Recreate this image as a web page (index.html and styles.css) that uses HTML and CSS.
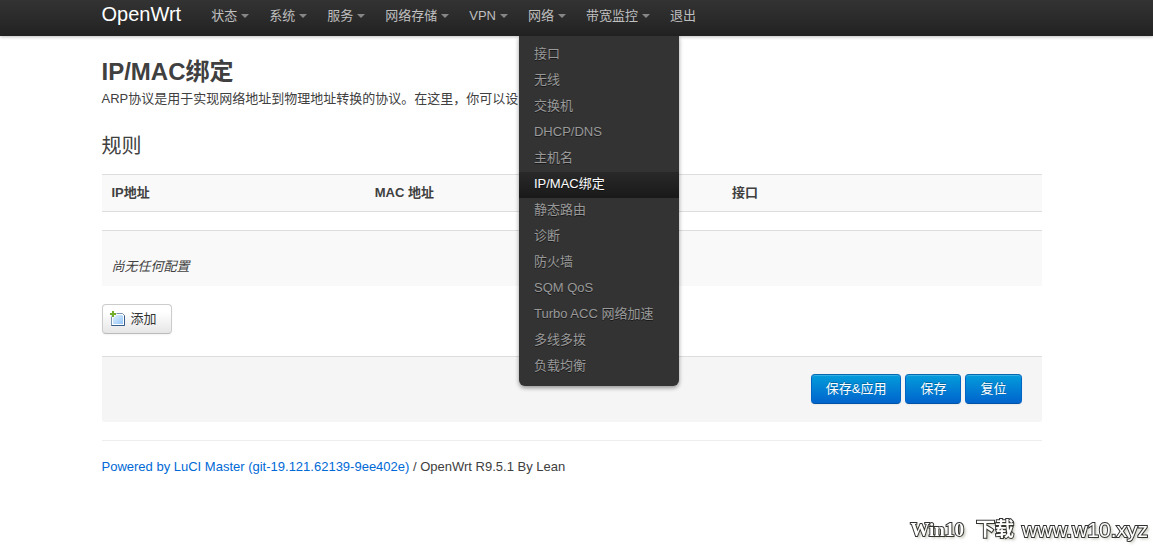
FILE: index.html
```html
<!DOCTYPE html>
<html lang="zh-CN">
<head>
<meta charset="utf-8">
<meta name="viewport" content="width=device-width, initial-scale=1">
<title>OpenWrt - IP/MAC绑定</title>
<link rel="stylesheet" href="styles.css">
</head>
<body>
<header class="topbar">
  <div class="container topbar-inner">
    <a class="brand" href="#">OpenWrt</a>
    <nav>
      <ul class="nav">
        <li><a class="nav-link has-menu" href="#">状态</a></li>
        <li><a class="nav-link has-menu" href="#">系统</a></li>
        <li><a class="nav-link has-menu" href="#">服务</a></li>
        <li><a class="nav-link has-menu" href="#">网络存储</a></li>
        <li><a class="nav-link has-menu" href="#">VPN</a></li>
        <li class="dropdown">
          <a class="nav-link has-menu" href="#">网络</a>
          <ul class="menu">
            <li><a href="#">接口</a></li>
            <li><a href="#">无线</a></li>
            <li><a href="#">交换机</a></li>
            <li><a href="#">DHCP/DNS</a></li>
            <li><a href="#">主机名</a></li>
            <li><a class="active" href="#">IP/MAC绑定</a></li>
            <li><a href="#">静态路由</a></li>
            <li><a href="#">诊断</a></li>
            <li><a href="#">防火墙</a></li>
            <li><a href="#">SQM QoS</a></li>
            <li><a href="#">Turbo ACC 网络加速</a></li>
            <li><a href="#">多线多拨</a></li>
            <li><a href="#">负载均衡</a></li>
          </ul>
        </li>
        <li><a class="nav-link has-menu" href="#">带宽监控</a></li>
        <li><a class="nav-link" href="#">退出</a></li>
      </ul>
    </nav>
  </div>
</header>
<main class="container">
  <h1>IP/MAC绑定</h1>
  <p class="description">ARP协议是用于实现网络地址到物理地址转换的协议。在这里，你可以设</p>
  <h2>规则</h2>
  <table class="rules">
    <thead>
      <tr><th class="col-ip">IP地址</th><th class="col-mac">MAC 地址</th><th>接口</th></tr>
    </thead>
  </table>
  <p class="empty"><em>尚无任何配置</em></p>
  <button class="btn btn-add" type="button">
    <svg class="icon" viewBox="0 0 16 16" aria-hidden="true">
      <defs>
        <linearGradient id="sheet" x1="0" y1="0" x2="1" y2="1">
          <stop offset="0" stop-color="#e0f0ff"/><stop offset="1" stop-color="#94c6f8"/>
        </linearGradient>
      </defs>
      <path d="M1.500 2.500H12.500L14.500 4.500V14.500H1.500Z" fill="#fff" stroke="#7b94b3"/>
      <path d="M14.500 4.500V14.500H1.500" fill="none" stroke="#365c8c"/>
      <path d="M3 4H12L13 5V13H3Z" fill="url(#sheet)"/>
      <path d="M2 0H4V2H6V4H4V6H2V4H0V2H2Z" fill="#72ae2b" stroke="#fff" stroke-width="1" paint-order="stroke"/>
    </svg>
    <span>添加</span>
  </button>
  <div class="actions">
    <button class="btn btn-primary" type="button">保存&amp;应用</button>
    <button class="btn btn-primary" type="button">保存</button>
    <button class="btn btn-primary" type="button">复位</button>
  </div>
  <footer>
    <a href="#">Powered by LuCI Master (git-19.121.62139-9ee402e)</a> / OpenWrt R9.5.1 By Lean
  </footer>
</main>
<div class="watermark"><b>Win10</b><b>下载</b><span>www.w10.xyz</span></div>
</body>
</html>
```
FILE: styles.css
```css
* {
  box-sizing: border-box;
}

body {
  margin: 0;
  padding-right: 10px;
  background: #fff;
  color: #404040;
  font: 13px/18px "Liberation Sans", "Noto Sans CJK SC", sans-serif;
}

h1, h2, p, ul {
  margin: 0;
  padding: 0;
}

ul {
  list-style: none;
}

a {
  color: #0069d6;
  text-decoration: none;
}

.container {
  max-width: 940px;
  margin: 0 auto;
}

.topbar {
  position: relative;
  z-index: 2;
  margin-right: -10px;
  padding-right: 10px;
  background: linear-gradient(#333, #222);
  box-shadow: 0 1px 3px rgba(0, 0, 0, 0.25);
}

.topbar-inner {
  display: flex;
  height: 36px;
}

.brand {
  padding: 4px 20px 12px 0;
  color: #fff;
  font-size: 20px;
  line-height: 20px;
}

.nav {
  display: flex;
}

.nav-link {
  display: flex;
  align-items: center;
  padding: 7px 10px 11px;
  color: #bfbfbf;
  line-height: 18px;
  white-space: nowrap;
}

.has-menu::after {
  content: "";
  margin-left: 4px;
  border: 4px solid transparent;
  border-top-color: #868686;
  border-bottom: 0;
}

.dropdown {
  position: relative;
}

.menu {
  position: absolute;
  top: 36px;
  left: 1px;
  width: 160px;
  padding: 6px 0;
  background: #333;
  border-radius: 0 0 6px 6px;
  box-shadow: 0 2px 4px rgba(0, 0, 0, 0.4);
}

.menu a {
  display: block;
  padding: 3px 15px 5px;
  color: #999;
  line-height: 18px;
  white-space: nowrap;
  text-shadow: 0 1px 0 rgba(0, 0, 0, 0.5);
}

.menu .active {
  background: linear-gradient(#292929, #191919);
  color: #fff;
}

main {
  padding-top: 18px;
}

h1 {
  font-size: 24px;
  line-height: 36px;
}

h2 {
  margin: 20px 0 10px;
  font-size: 20px;
  font-weight: 400;
  line-height: 36px;
}

.rules {
  width: 100%;
  table-layout: fixed;
  border-collapse: separate;
  border-spacing: 0;
  border: solid #ddd;
  border-width: 1px 0;
  background: #f9f9f9;
}

.rules th {
  padding: 9px 10px;
  text-align: left;
}

.col-ip {
  width: 28%;
}

.col-mac {
  width: 38%;
}

.empty {
  margin: 18px 0;
  padding: 27px 10px 10px;
  border-top: 1px solid #ddd;
  background: #f9f9f9;
}

.btn {
  display: inline-flex;
  align-items: center;
  gap: 5px;
  padding: 5px 14px;
  border: 1px solid #ccc;
  border-bottom-color: #bbb;
  border-radius: 4px;
  background: linear-gradient(#fff 25%, #e6e6e6);
  color: #333;
  font: inherit;
  box-shadow: inset 0 1px 0 rgba(255, 255, 255, 0.2), 0 1px 2px rgba(0, 0, 0, 0.05);
}

.btn-add {
  padding-left: 7px;
}

.icon {
  width: 16px;
  height: 16px;
}

.btn-primary {
  border-color: #0469b0 #0065c4 #0052a5;
  background: linear-gradient(#049cdb, #0064cd);
  color: #fff;
  text-shadow: 0 -1px 0 rgba(0, 0, 0, 0.25);
}

.actions {
  display: flex;
  justify-content: flex-end;
  gap: 4px;
  margin: 22px 0 18px;
  padding: 17px 20px 18px;
  border-top: 1px solid #ddd;
  border-radius: 0 0 3px 3px;
  background: #f5f5f5;
}

footer {
  padding: 17px 0;
  border-top: 1px solid #eee;
}

.watermark {
  position: fixed;
  right: 5px;
  bottom: 7px;
  display: flex;
  align-items: center;
  color: #fff;
  font: 19px/28px "Liberation Serif", "Noto Sans CJK SC", serif;
  -webkit-text-stroke: 2px #333;
  paint-order: stroke fill;
  text-shadow: 2px 2px 3px rgba(70, 70, 40, 0.4);
}

.watermark b {
  margin-right: 8px;
}

.watermark b:first-child {
  margin-right: 12px;
}

.watermark span {
  font-family: "Liberation Sans", sans-serif;
  font-size: 21px;
}
```
